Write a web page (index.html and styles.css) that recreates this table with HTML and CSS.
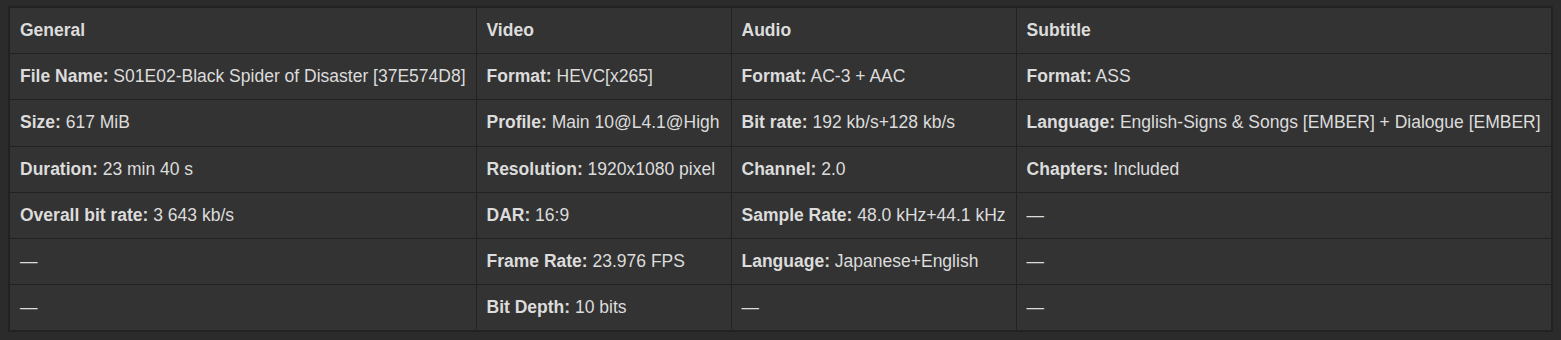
FILE: index.html
```html
<!DOCTYPE html>
<html lang="en">
<head>
    <meta charset="UTF-8">
    <meta name="viewport" content="width=device-width, initial-scale=1.0">
    <title>Media Info</title>
    <link rel="stylesheet" href="styles.css">
</head>
<body>
    <table class="media-info">
        <thead>
            <tr>
                <th class="col-general">General</th>
                <th class="col-video">Video</th>
                <th class="col-audio">Audio</th>
                <th class="col-subtitle">Subtitle</th>
            </tr>
        </thead>
        <tbody>
            <tr>
                <td><b>File Name:</b> S01E02-Black Spider of Disaster [37E574D8]</td>
                <td><b>Format:</b> HEVC[x265]</td>
                <td><b>Format:</b> AC-3 + AAC</td>
                <td><b>Format:</b> ASS</td>
            </tr>
            <tr>
                <td><b>Size:</b> 617 MiB</td>
                <td><b>Profile:</b> Main 10@L4.1@High</td>
                <td><b>Bit rate:</b> 192 kb/s+128 kb/s</td>
                <td><b>Language:</b> English-Signs &amp; Songs [EMBER] + Dialogue [EMBER]</td>
            </tr>
            <tr>
                <td><b>Duration:</b> 23 min 40 s</td>
                <td><b>Resolution:</b> 1920x1080 pixel</td>
                <td><b>Channel:</b> 2.0</td>
                <td><b>Chapters:</b> Included</td>
            </tr>
            <tr>
                <td><b>Overall bit rate:</b> 3 643 kb/s</td>
                <td><b>DAR:</b> 16:9</td>
                <td><b>Sample Rate:</b> 48.0 kHz+44.1 kHz</td>
                <td>—</td>
            </tr>
            <tr>
                <td>—</td>
                <td><b>Frame Rate:</b> 23.976 FPS</td>
                <td><b>Language:</b> Japanese+English</td>
                <td>—</td>
            </tr>
            <tr>
                <td>—</td>
                <td><b>Bit Depth:</b> 10 bits</td>
                <td>—</td>
                <td>—</td>
            </tr>
        </tbody>
    </table>
</body>
</html>
```

FILE: styles.css
```css
body {
    margin: 6px 8px;
    background-color: #2b2b2b;
    color: #dcdcdc;
    font-family: "Liberation Sans", Arial, sans-serif;
    font-size: 17.5px;
}

.media-info {
    width: 100%;
    border-collapse: collapse;
    border: 2px solid #222;
    background-color: #333;
}

.media-info th,
.media-info td {
    padding: 10px;
    line-height: 25.2px;
    text-align: left;
    white-space: nowrap;
    border: 1px solid #222;
}

.media-info th {
    font-weight: bold;
}

.media-info b {
    font-weight: bold;
}

.col-general {
    width: 445px;
}

.col-video {
    width: 234px;
}

.col-audio {
    width: 264px;
}
```
